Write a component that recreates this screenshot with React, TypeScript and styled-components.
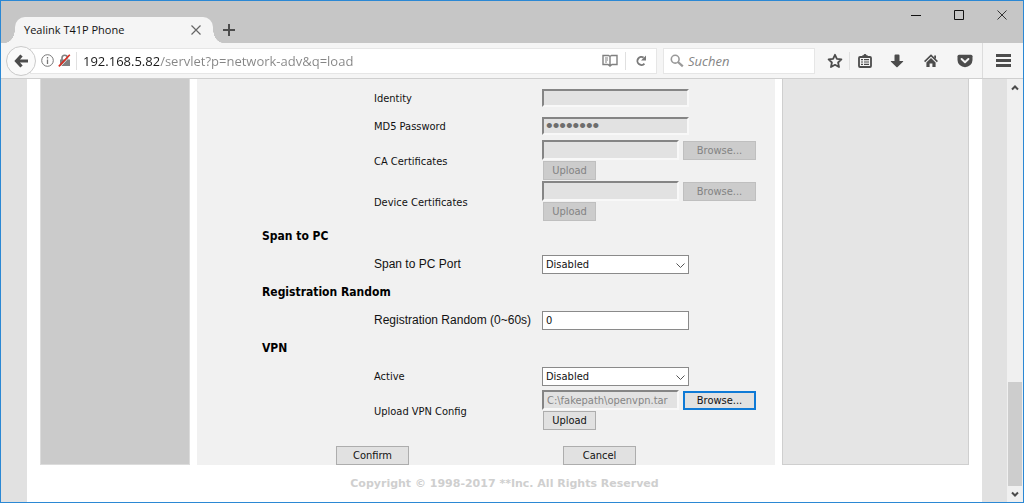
import React from "react";
import styled, { createGlobalStyle, css } from "styled-components";

const uiFont = `"Open Sans", "Noto Sans", sans-serif`;
const pageFont = `"DejaVu Sans Condensed", "DejaVu Sans", sans-serif`;

const GlobalStyle = createGlobalStyle`
  *, *::before, *::after { box-sizing: border-box; }
  body { margin: 0; background: #fff; font: 11px/16px ${pageFont}; color: #111; }
  button, input, select { font: inherit; color: inherit; margin: 0; }
`;

const Window = styled.div`
  display: flex;
  flex-direction: column;
  min-height: 100vh;
  border: 1px solid #2b88d4;
`;

/* ---------- title bar ---------- */

const TitleBar = styled.header`
  display: flex;
  align-items: flex-end;
  height: 42px;
  background: #c6c6c6;
  font-family: ${uiFont};
`;

const Tab = styled.div`
  position: relative;
  display: flex;
  align-items: center;
  justify-content: space-between;
  width: 198px;
  height: 26px;
  margin-left: 14px;
  padding: 0 10px 0 9px;
  background: #f5f5f5;
  border-radius: 10px 10px 0 0;

  &::before,
  &::after {
    content: "";
    position: absolute;
    bottom: 0;
    width: 10px;
    height: 14px;
  }
  &::before {
    right: 100%;
    background: radial-gradient(ellipse 10px 14px at 0 0, transparent 97%, #f5f5f5 100%);
  }
  &::after {
    left: 100%;
    background: radial-gradient(ellipse 10px 14px at 100% 0, transparent 97%, #f5f5f5 100%);
  }
`;

const IconButton = styled.button<{ $width?: number; $divided?: boolean }>`
  display: flex;
  flex: none;
  align-items: center;
  justify-content: center;
  align-self: stretch;
  width: ${(p) => p.$width ?? 34}px;
  padding: 0;
  border: 0;
  background: none;
  color: #4c4c4c;
  ${(p) => p.$divided && css`border-left: 1px solid #dcdcdc;`}
`;

const NewTab = styled(IconButton)`
  align-self: flex-end;
  height: 26px;
  margin-left: 4px;
`;

const WindowControls = styled.div`
  display: flex;
  align-self: flex-start;
  height: 28px;
  margin-left: auto;
`;

/* ---------- navigation bar ---------- */

const NavBar = styled.nav`
  display: flex;
  align-items: center;
  height: 36px;
  padding-left: 5px;
  background: #f5f5f5;
  border-bottom: 1px solid #cfcfcf;
  font: 13px/18px ${uiFont};
`;

const BackButton = styled.button`
  position: relative;
  z-index: 1;
  display: flex;
  flex: none;
  align-items: center;
  justify-content: center;
  width: 30px;
  height: 30px;
  padding: 0;
  border: 1px solid #cacaca;
  border-radius: 50%;
  background: #fafafa;
  color: #4c4c4c;
`;

const Bar = styled.div`
  display: flex;
  align-items: center;
  height: 26px;
  border: 1px solid #e6e6e6;
  background: #fff;
`;

const AddressBar = styled(Bar)`
  flex: 1;
  min-width: 0;
  margin-left: -6px;
  padding-left: 8px;
`;

const SearchBar = styled(Bar)`
  width: 152px;
  margin: 0 5px 0 6px;
  padding-left: 6px;
  gap: 4px;
`;

const Divider = styled.span`
  width: 1px;
  height: 18px;
  background: #e0e0e0;
`;

const AddressInput = styled.input`
  flex: 1;
  min-width: 0;
  margin-left: 6px;
  padding: 0;
  border: 0;
  outline: 0;
  color: #808080;
  background: linear-gradient(to right, #1a1a1a 76px, #858585 76px);
  background-clip: text;
  -webkit-text-fill-color: transparent;
`;

const SearchInput = styled.input`
  flex: 1;
  min-width: 0;
  padding: 0;
  border: 0;
  outline: 0;
  background: none;
  &::placeholder { color: #858585; font-style: italic; opacity: 1; }
`;

/* ---------- page ---------- */

const Viewport = styled.div`
  display: flex;
  flex: 1;
  background: #e1e1e1;
`;

const Sheet = styled.div`
  flex: 1;
  min-width: 0;
  margin: 0 25px 0 26px;
  padding: 0 13px;
  background: #fff;
`;

const Columns = styled.div`
  display: flex;
  gap: 7px;
`;

const Sidebar = styled.aside`
  flex: none;
  width: 150px;
  background: #cbcbcb;
  border: solid #dcdcdc;
  border-width: 0 1px 1px;
`;

const HelpPanel = styled.aside`
  flex: none;
  width: 187px;
  background: #e5e5e5;
  border: solid #cfcfcf;
  border-width: 0 1px 1px;
`;

const Form = styled.form`
  flex: 1;
  min-width: 0;
  padding-top: 5px;
  background: #f1f1f1;
`;

const Row = styled.div<{ $tall?: boolean }>`
  display: flex;
  align-items: center;
  height: ${(p) => (p.$tall ? 41 : 28)}px;
  padding-left: 177px;
`;

const Label = styled.label<{ $plain?: boolean }>`
  flex: none;
  width: 168px;
  white-space: nowrap;
  ${(p) => (p.$plain ? css`font: 12px/16px "Liberation Sans", Arial, sans-serif;` : css`padding-top: 2px;`)}
`;

const Heading = styled.h2`
  margin: 0;
  padding-left: 65px;
  font-size: 12px;
  line-height: 28px;
  font-weight: bold;
  color: #000;
`;

const control = css`
  width: 147px;
  height: 19px;
  padding: 1px 3px 0;
  border: 1px solid #8a8a8a;
  border-radius: 0;
  background: #fff;
  line-height: 16px;
`;

const sunken = css`
  border: 2px solid;
  border-color: #858585 #f8f8f8 #f8f8f8 #858585;
  background: #e2e2e2;
`;

const TextInput = styled.input`
  ${control}
  &:disabled {
    ${sunken}
    height: 18px;
    color: #6d6d6d;
  }
  &[type="password"] {
    padding: 0 2px;
    font: 19px/14px "Liberation Sans", Arial, sans-serif;
  }
`;

const FileInput = styled.input`
  ${sunken}
  width: 137px;
  height: 20px;
  padding: 1px 3px 0;
  border-radius: 0;
  color: #858585;
`;

const SelectWrap = styled.span`
  position: relative;
  display: flex;
  svg { position: absolute; right: 4px; top: 7px; pointer-events: none; }
`;

const Select = styled.select`
  ${control}
  appearance: none;
`;

const Button = styled.button<{ $small?: boolean; $focused?: boolean }>`
  width: ${(p) => (p.$small ? 53 : 73)}px;
  height: 19px;
  padding: 1px 0 0;
  border: ${(p) => (p.$focused ? "2px solid #0f7ad6" : "1px solid #adadad")};
  border-radius: 0;
  background: #e1e1e1;
  line-height: 14px;
  color: #111;
  &:disabled { background: #cccccc; border-color: #bfbfbf; color: #838383; }
`;

const UploadField = styled.div`
  display: flex;
  flex-direction: column;
  align-items: flex-start;
  align-self: flex-start;
  gap: 1px;
`;

const UploadLine = styled.div`
  display: flex;
  align-items: flex-end;
  gap: 4px;
`;

const UploadAction = styled.div`
  display: flex;
  padding-left: 1px;
`;

const Actions = styled.div`
  display: flex;
  gap: 154px;
  padding: 15px 0 0 139px;
`;

const Footer = styled.footer`
  padding: 11px 0 8px;
  text-align: center;
  font: bold 11px/16px "DejaVu Sans", sans-serif;
  color: #cfcfcf;
`;

const Scrollbar = styled.div`
  display: flex;
  flex-direction: column;
  width: 16px;
  background: #f0f0f0;
`;

const ScrollButton = styled(IconButton)`
  align-self: auto;
  height: 16px;
`;

const Track = styled.div`
  display: flex;
  flex: 1;
  flex-direction: column;
  justify-content: flex-end;
`;

const Thumb = styled.div`
  height: 104px;
  margin: 0 1px;
  background: #cdcdcd;
`;

const Stroke = ({ d, w = 10, h = 10, sw = 1, color = "currentColor" }: { d: string; w?: number; h?: number; sw?: number; color?: string }) => (
  <svg width={w} height={h} viewBox={`0 0 ${w} ${h}`} fill="none" stroke={color} strokeWidth={sw} aria-hidden="true">
    <path d={d} />
  </svg>
);

const UploadRow = ({ id, label, value = "", disabled }: { id: string; label: string; value?: string; disabled?: boolean }) => (
  <Row $tall>
    <Label htmlFor={id}>{label}</Label>
    <UploadField>
      <UploadLine>
        <FileInput id={id} defaultValue={value} disabled />
        <Button type="button" disabled={disabled} $focused={!disabled}>Browse...</Button>
      </UploadLine>
      <UploadAction>
        <Button type="button" $small disabled={disabled}>Upload</Button>
      </UploadAction>
    </UploadField>
  </Row>
);

const SelectRow = ({ id, label, plain }: { id: string; label: string; plain?: boolean }) => (
  <Row>
    <Label htmlFor={id} $plain={plain}>{label}</Label>
    <SelectWrap>
      <Select id={id} defaultValue="Disabled">
        <option>Disabled</option>
        <option>Enabled</option>
      </Select>
      <Stroke d="M0.5 1.5 L4.5 5.5 L8.5 1.5" w={9} h={7} color="#555" />
    </SelectWrap>
  </Row>
);

export default function App() {
  return (
    <Window>
      <GlobalStyle />
      <TitleBar>
        <Tab>
          <span>Yealink T41P Phone</span>
          <IconButton $width={14} aria-label="Close tab">
            <Stroke d="M0.5 0.5 L9.5 9.5 M9.5 0.5 L0.5 9.5" sw={1.2} color="#666" />
          </IconButton>
        </Tab>
        <NewTab $width={24} aria-label="New tab">
          <Stroke d="M6 0 V12 M0 6 H12" w={12} h={12} sw={2} />
        </NewTab>
        <WindowControls>
          <IconButton $width={43} aria-label="Minimize"><Stroke d="M0 5.5 H10" color="#111" /></IconButton>
          <IconButton $width={43} aria-label="Maximize"><Stroke d="M0.5 0.5 H9.5 V9.5 H0.5 Z" color="#111" /></IconButton>
          <IconButton $width={43} aria-label="Close"><Stroke d="M0.5 0.5 L9.5 9.5 M9.5 0.5 L0.5 9.5" color="#333" /></IconButton>
        </WindowControls>
      </TitleBar>

      <NavBar>
        <BackButton aria-label="Back">
          <Stroke d="M7.5 1.5 L2.5 7 L7.5 12.5 M3 7 H14" w={14} h={14} sw={3.2} />
        </BackButton>
        <AddressBar>
          <IconButton $width={17} aria-label="Site information">
            <svg width="13" height="13" viewBox="0 0 13 13" fill="none" stroke="#777" aria-hidden="true">
              <circle cx="6.5" cy="6.5" r="5.8" />
              <path d="M6.5 5.5 V10 M6.5 3 V4.5" strokeWidth="1.3" />
            </svg>
          </IconButton>
          <IconButton $width={16} aria-label="Insecure connection">
            <svg width="13" height="13" viewBox="0 0 13 13" fill="none" aria-hidden="true">
              <path d="M4 6 V4 a2.7 2.7 0 0 1 5.4 0 V6" stroke="#808080" strokeWidth="1.6" />
              <rect x="2" y="5.5" width="10" height="6.5" fill="#808080" />
              <path d="M2 13 L12.8 1.6" stroke="#fff" strokeWidth="0.8" />
              <path d="M0.8 12.4 L11.8 0.8" stroke="#d92d21" strokeWidth="1.6" />
            </svg>
          </IconButton>
          <IconButton as="span" $width={4} />
          <Divider />
          <AddressInput aria-label="Address" defaultValue="192.168.5.82/servlet?p=network-adv&q=load" />
          <IconButton $width={30} aria-label="Reader view">
            <svg width="16" height="13" viewBox="0 0 16 13" fill="none" stroke="#808080" aria-hidden="true">
              <path d="M8 2.5 L6.5 1.5 H1 V10.5 H6 L8 12 L10 10.5 H15 V1.5 H9.5 L8 2.5 V11" strokeWidth="1.4" />
              <path d="M3 4 H6 M3 6 H6 M3 8 H5" />
            </svg>
          </IconButton>
          <Divider />
          <IconButton $width={30} aria-label="Reload">
            <svg width="12" height="12" viewBox="0 0 12 12" fill="none" aria-hidden="true">
              <path d="M8.6 2.6 A4 4 0 1 0 9.4 8.6" stroke="#7a7a7a" strokeWidth="1.9" />
              <path d="M11 0.5 V5.5 H6 Z" fill="#7a7a7a" />
            </svg>
          </IconButton>
        </AddressBar>
        <SearchBar>
          <svg width="14" height="14" viewBox="0 0 14 14" fill="none" stroke="#999" aria-hidden="true">
            <circle cx="5.2" cy="5.2" r="3.9" strokeWidth="1.6" />
            <path d="M8 8 L12.8 12.4" strokeWidth="2.2" />
          </svg>
          <SearchInput aria-label="Search" placeholder="Suchen" />
        </SearchBar>
        <IconButton $width={29} aria-label="Bookmark this page">
          <svg width="16" height="16" viewBox="0 0 16 16" fill="none" stroke="currentColor" aria-hidden="true">
            <path d="M8 1.8 L9.9 5.9 L14.4 6.4 L11.1 9.5 L12 14 L8 11.8 L4 14 L4.9 9.5 L1.6 6.4 L6.1 5.9 Z" strokeWidth="1.8" strokeLinejoin="round" />
          </svg>
        </IconButton>
        <Divider />
        <IconButton $width={30} aria-label="Bookmarks">
          <svg width="14" height="14" viewBox="0 0 14 14" fill="none" stroke="currentColor" aria-hidden="true">
            <rect x="1" y="3" width="12" height="10" rx="1" strokeWidth="1.8" />
            <path d="M4 2.4 H5.4 L7 0.6 L8.6 2.4 H10" strokeWidth="1.6" />
            <path d="M3 5.7 H5 M6 5.7 H11 M3 8 H5 M6 8 H11 M3 10.3 H5 M6 10.3 H11" strokeWidth="1.2" />
          </svg>
        </IconButton>
        <IconButton aria-label="Downloads">
          <svg width="14" height="14" viewBox="0 0 14 14" fill="currentColor" aria-hidden="true">
            <path d="M4.5 1.5 Q4.5 0.5 5.5 0.5 H8.5 Q9.5 0.5 9.5 1.5 V7 H13 Q13.5 7.2 13 7.8 L7.6 13 Q7 13.5 6.4 13 L1 7.8 Q0.5 7.2 1 7 H4.5 Z" />
          </svg>
        </IconButton>
        <IconButton aria-label="Home">
          <svg width="14" height="14" viewBox="0 0 14 14" fill="none" aria-hidden="true">
            <path d="M0.6 7.6 L7 1.4 L13.4 7.6" stroke="currentColor" strokeWidth="1.6" />
            <path d="M2.4 8.4 L7 4 L11.6 8.4 V13 H8.4 V9.5 H5.6 V13 H2.4 Z" fill="currentColor" />
            <path d="M10.2 1.5 H12 V5 L10.2 3.4 Z" fill="currentColor" />
          </svg>
        </IconButton>
        <IconButton aria-label="Save to Pocket">
          <svg width="16" height="14" viewBox="0 0 16 14" fill="none" aria-hidden="true">
            <path d="M2 0.8 H14 Q15.5 0.8 15.5 2.3 V6 A7.5 7.2 0 0 1 0.5 6 V2.3 Q0.5 0.8 2 0.8 Z" fill="currentColor" />
            <path d="M4.6 5 L8 8.2 L11.4 5" stroke="#f5f5f5" strokeWidth="2" strokeLinecap="round" strokeLinejoin="round" />
          </svg>
        </IconButton>
        <IconButton $width={41} $divided aria-label="Open menu">
          <Stroke d="M1.5 1.5 H13.5 M1.5 6.5 H13.5 M1.5 11.5 H13.5 M0 1.5 H15 M0 6.5 H15 M0 11.5 H15" w={15} h={13} sw={3} />
        </IconButton>
      </NavBar>

      <Viewport>
        <Sheet>
          <Columns>
            <Sidebar />
            <Form onSubmit={(e) => e.preventDefault()}>
              <Row>
                <Label htmlFor="identity">Identity</Label>
                <TextInput id="identity" disabled />
              </Row>
              <Row>
                <Label htmlFor="md5">MD5 Password</Label>
                <TextInput id="md5" type="password" defaultValue="password" disabled />
              </Row>
              <UploadRow id="ca" label="CA Certificates" disabled />
              <UploadRow id="device" label="Device Certificates" disabled />
              <Heading>Span to PC</Heading>
              <SelectRow id="span" label="Span to PC Port" plain />
              <Heading>Registration Random</Heading>
              <Row>
                <Label htmlFor="random" $plain>Registration Random (0~60s)</Label>
                <TextInput id="random" defaultValue="0" />
              </Row>
              <Heading>VPN</Heading>
              <SelectRow id="active" label="Active" />
              <UploadRow id="vpn" label="Upload VPN Config" value="C:\fakepath\openvpn.tar" />
              <Actions>
                <Button type="submit">Confirm</Button>
                <Button type="button">Cancel</Button>
              </Actions>
            </Form>
            <HelpPanel />
          </Columns>
          <Footer>Copyright © 1998-2017 **Inc. All Rights Reserved</Footer>
        </Sheet>
        <Scrollbar>
          <ScrollButton $width={16} aria-label="Scroll up"><Stroke d="M1 5.5 L4 2.5 L7 5.5" w={8} h={7} sw={2} /></ScrollButton>
          <Track><Thumb /></Track>
          <ScrollButton $width={16} aria-label="Scroll down"><Stroke d="M1 1.5 L4 4.5 L7 1.5" w={8} h={7} sw={2} /></ScrollButton>
        </Scrollbar>
      </Viewport>
    </Window>
  );
}
